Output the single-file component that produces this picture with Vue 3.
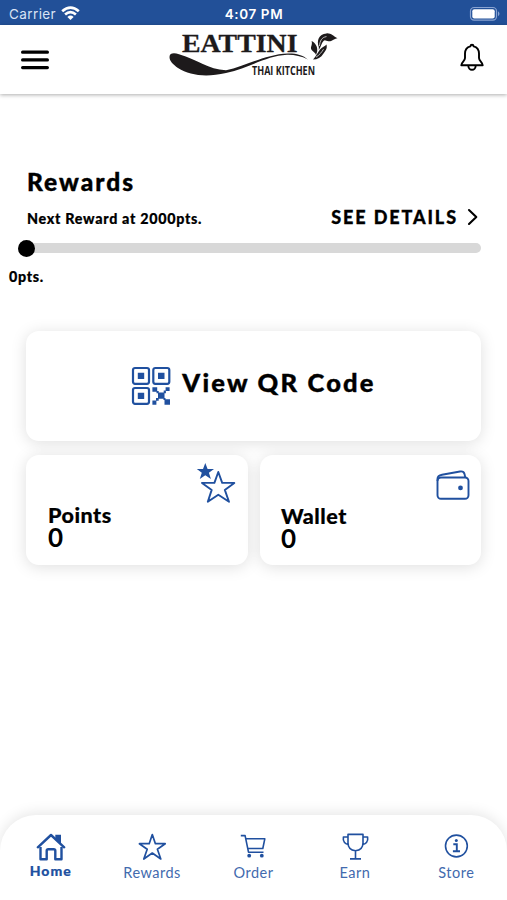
<script setup>
const progress = 0
</script>

<template>
  <div class="screen">
    <div class="status">
      <div class="carrier">
        <span>Carrier</span>
        <svg width="19" height="15" viewBox="0 0 19 15" fill="none" stroke="#fff" stroke-width="2.7">
          <path d="M1.2 5.3Q9.5-2 17.8 5.3" />
          <path d="M4.1 8.4Q9.5 3.7 14.9 8.4" />
          <path d="M9.5 14L6.4 10.9Q9.5 8.3 12.6 10.9Z" fill="#fff" stroke="none" />
        </svg>
      </div>
      <div class="time">4:07 PM</div>
      <div class="power">
        <svg width="32" height="16" viewBox="0 0 32 16">
          <rect x="1.5" y="1.5" width="26" height="12.6" rx="3.6" fill="none" stroke="#89a3d1" stroke-width="1.2" />
          <rect x="3.3" y="3.2" width="22.4" height="9.2" rx="2" fill="#fff" />
          <path d="M29 5.3Q32 7.8 29 10.3Z" fill="#89a3d1" />
        </svg>
      </div>
    </div>

    <header class="header">
      <svg class="menu" width="28" height="20" viewBox="0 0 28 20" stroke="#000" stroke-width="3.2" stroke-linecap="round">
        <path d="M1.6 2.2H26.4M1.6 9.9H26.4M1.6 17.6H26.4" />
      </svg>
      <svg class="logo" width="172" height="48" viewBox="168 31 172 48" fill="#1d1a1b">
        <text class="brand" x="182" y="51.8" textLength="115.5" lengthAdjust="spacingAndGlyphs">EATTINI</text>
        <path d="M169.5 57C169.5 53 174 52.6 179 54.3C198 60 208 69.5 226 70.2C245 67 264 54.2 288 53.4C296 53.2 303 55 308 59.5C301 56 294 54.6 287 54.8C266 56 250 67.5 226 73C206 77.5 190 75.5 178 68C173 64.5 169.5 61 169.5 57Z" />
        <path d="M318.8 47C316.5 41 318.5 34.2 326.5 33.4C331 33 333.5 36.5 337.5 38.2C333.5 39 332 41.6 328.5 41.3C326 41 325 39.4 323.5 41C321.5 43 321 46.5 318.8 50Z" />
        <path d="M311.6 41C315.5 43 317.8 46.5 317.2 51.5L316 55C315.5 52 311.5 51.5 311 48.5C310.8 46 312.6 44.5 311.6 41Z" />
        <path d="M313 59.6C316 56 318 52.5 320 49.5C322 47 325 46.6 326.5 44.5C327.5 49 325.5 50.5 323.5 53.5C321 57.5 317.5 59.6 313 59.6Z" />
        <path d="M319.4 46C320 41 321.5 37.3 326.5 36.6M316 57.2C319.5 55 321.8 52 323.5 49.2" fill="none" stroke="#fff" stroke-width=".7" />
        <text class="tagline" x="252" y="75.3" textLength="63" lengthAdjust="spacingAndGlyphs">THAI KITCHEN</text>
      </svg>
      <svg class="bell" width="26" height="30" viewBox="0 0 26 30" fill="none" stroke="#000" stroke-width="1.9" stroke-linejoin="round">
        <path d="M13 1.7C12 1.7 11.5 2.5 11.4 3.3C8 4.2 6 7 6 10.6V15C6 18 2.3 19.2 2.3 22.3H23.7C23.7 19.2 20 18 20 15V10.6C20 7 18 4.2 14.6 3.3C14.5 2.5 14 1.7 13 1.7Z" />
        <path d="M9.3 22.5A3.7 4.3 0 0 0 16.7 22.5" />
      </svg>
    </header>

    <main class="content">
      <h1>Rewards</h1>
      <div class="reward-row">
        <span class="next">Next Reward at 2000pts.</span>
        <a class="details">
          <span>SEE DETAILS</span>
          <svg width="12" height="18" viewBox="0 0 12 18" fill="none" stroke="#000" stroke-width="2.1" stroke-linecap="round" stroke-linejoin="round">
            <path d="M2 2L9.3 9L2 16" />
          </svg>
        </a>
      </div>
      <div class="track"><i class="thumb" :style="{ left: progress + '%' }"></i></div>
      <div class="current">0pts.</div>

      <section class="card qr">
        <svg width="40" height="40" viewBox="0 0 40 40" fill="#20509f">
          <g fill="none" stroke="#20509f" stroke-width="2.2">
            <rect x="2" y="2" width="16" height="15.8" rx="2" />
            <rect x="22.3" y="2" width="16" height="15.8" rx="2" />
            <rect x="2" y="22" width="16" height="15.8" rx="2" />
          </g>
          <path d="M6.8 6.7h6.4V13H6.8zM27 6.7h6.5V13H27zM6.8 26.8h6.4v6.3H6.8zM21.4 21.2h4.8v4.5h-4.8zM34.6 21.2h4v3.7h-4zM27 26.5h6.5v6.3H27zM21.4 34.5h4v4.2h-4zM33.5 33.2h5.5v5.5h-5.5zM25.5 25h2.2v2.2h-2.2zM32.7 24.5h2.2v2.7h-2.2zM25 32h2.7v2.7H25zM32.5 32h2v2h-2z" />
        </svg>
        <span>View QR Code</span>
      </section>

      <div class="tiles">
        <section class="card tile">
          <svg class="tile-icon" width="40" height="42" viewBox="0 0 40 42">
            <path d="M9.3 1L11.6 7H18L12.9 10.8L14.9 17L9.3 13.3L3.8 17L5.8 10.8L.8 7H7Z" fill="#20509f" />
            <path d="M22.3 10L26.2 20.9H38.3L28.8 27.9L33 39.8L22.3 32.8L11.8 39.8L15.7 27.9L6 20.9H18.4Z" fill="#fff" stroke="#20509f" stroke-width="1.9" stroke-linejoin="round" />
          </svg>
          <span class="label points">Points</span>
          <span class="value">0</span>
        </section>
        <section class="card tile second">
          <svg class="tile-icon wallet-icon" width="34" height="31" viewBox="0 0 34 31" fill="none" stroke="#20509f" stroke-width="1.9">
            <rect x="1.5" y="7.5" width="31" height="21.3" rx="3.5" />
            <path d="M1.5 11V8.8C1.5 6 3 5.2 6 4.7L24 1.5C27 1 28 2 28.5 4L29.3 7.5" />
            <circle cx="24.5" cy="17.9" r="2.4" fill="#20509f" stroke="none" />
          </svg>
          <span class="label wallet">Wallet</span>
          <span class="value">0</span>
        </section>
      </div>
    </main>

    <nav class="tabs">
      <a class="tab active">
        <svg width="32" height="30" viewBox="0 0 32 30" fill="none" stroke="#20509f" stroke-width="2.4" stroke-linejoin="round">
          <path d="M5.5 15V27.3H11.7V18.8Q11.7 17.3 13.2 17.3H18.8Q20.3 17.3 20.3 18.8V27.3H26.5V15" />
          <path d="M2.8 15.3L16 3L29.2 15.3" stroke-linecap="round" />
          <path d="M20.3 2.8H26V13L20.3 7Z" fill="#20509f" stroke="none" />
        </svg>
        <span>Home</span>
      </a>
      <a class="tab rewards">
        <svg width="32" height="30" viewBox="0 0 32 30" fill="none" stroke="#20509f" stroke-width="1.7" stroke-linejoin="round">
          <path d="M16.3 2.5L19.4 11.7H29.2L21.4 17.3L24.8 27L16.3 21L7.8 27L11.2 17.3L3.4 11.7H13.2Z" />
        </svg>
        <span>Rewards</span>
      </a>
      <a class="tab order">
        <svg width="32" height="30" viewBox="0 0 32 30" fill="none" stroke="#20509f" stroke-width="1.6" stroke-linejoin="round">
          <path d="M3.8 3.6H8.1L11.5 20.2H26.5M9 6.8H27.8L25.8 16.5H10.8" />
          <g fill="#20509f" stroke="none"><circle cx="12.2" cy="23.7" r="1.9" /><circle cx="24.8" cy="23.7" r="1.9" /></g>
        </svg>
        <span>Order</span>
      </a>
      <a class="tab earn">
        <svg width="32" height="30" viewBox="0 0 32 30" fill="none" stroke="#20509f" stroke-width="1.6" stroke-linejoin="round">
          <path d="M9 2.4H24V11C24 15.3 21 18.2 16.5 18.8C12 18.2 9 15.3 9 11ZM9 5H4.4C3.5 9.8 6.5 12.2 9.5 12.4M24 5H28.6C29.5 9.8 26.5 12.2 23.5 12.4M16.5 18.8V26.7M11 26.9H22" />
        </svg>
        <span>Earn</span>
      </a>
      <a class="tab store">
        <svg width="32" height="30" viewBox="0 0 32 30" fill="none" stroke="#20509f" stroke-width="1.6">
          <circle cx="16.4" cy="14" r="10.9" />
          <path d="M13.3 12.2H16.8V19M12.9 19.2H20" stroke-width="1.9" />
          <circle cx="16.3" cy="8.5" r="1.5" fill="#20509f" stroke="none" />
        </svg>
        <span>Store</span>
      </a>
    </nav>
  </div>
</template>

<style>
body { margin: 0; background: #fff; }
</style>

<style scoped>
* { box-sizing: border-box; }
.screen {
  height: 900px;
  display: flex;
  flex-direction: column;
  overflow: hidden;
  background: #fff;
  color: #000;
  font-family: Lato, "Liberation Sans", sans-serif;
  white-space: nowrap;
}
.status {
  height: 25px;
  flex: none;
  display: grid;
  grid-template-columns: 1fr auto 1fr;
  align-items: center;
  background: #225098;
  color: #fff;
  font-family: Inter, sans-serif;
  font-size: 13.5px;
  padding: 2px 8px 0 9px;
}
.carrier { display: flex; gap: 5px; align-items: center; color: #d9e3f4; letter-spacing: .4px; }
.time { font-weight: 600; font-size: 13.5px; letter-spacing: .6px; }
.power { display: flex; justify-content: flex-end; margin-right: -2px; }
.header {
  height: 69px;
  flex: none;
  display: flex;
  align-items: flex-start;
  justify-content: space-between;
  padding: 6px 22px 0 21px;
  box-shadow: 0 1px 4px rgba(0, 0, 0, .32);
}
.menu { margin-top: 19px; }
.brand { font: 700 25px "Liberation Serif", serif; stroke: #1d1a1b; stroke-width: .3px; }
.tagline { font: 700 11.5px "Open Sans", sans-serif; }
.bell { margin-top: 12px; }
.content { flex: 1; padding: 73px 26px 0; }
h1 { margin: 0 0 0 1px; font-size: 24.5px; line-height: 30px; font-weight: 900; letter-spacing: 2px; -webkit-text-stroke: .4px #000; }
.reward-row {
  display: flex;
  justify-content: space-between;
  align-items: center;
  height: 24px;
  margin: 8px 2px 0 1px;
}
.next { font-size: 14.3px; line-height: 20px; font-weight: 900; letter-spacing: .7px; padding-top: 4px; -webkit-text-stroke: .2px #000; }
.details { display: flex; align-items: center; gap: 9px; font-size: 18px; line-height: 22px; font-weight: 900; letter-spacing: 1.9px; -webkit-text-stroke: .3px #000; }
.details span { margin-left: -1px; }
.track { position: relative; height: 10px; margin-top: 14px; border-radius: 5px; background: #d8d8d8; }
.thumb { position: absolute; top: -3.5px; width: 17px; height: 17px; margin-left: -8px; border-radius: 50%; background: #000; }
.current { margin: 14px 0 0 -17px; font-size: 14.3px; line-height: 20px; font-weight: 900; letter-spacing: .7px; -webkit-text-stroke: .2px #000; }
.card { background: #fff; border-radius: 13px; box-shadow: 0 2px 16px rgba(0, 0, 0, .13); }
.qr {
  height: 110px;
  margin-top: 44px;
  display: flex;
  align-items: center;
  justify-content: center;
  gap: 11px;
  font-size: 25.5px;
  line-height: 30px;
  font-weight: 900;
  letter-spacing: 2.2px;
  -webkit-text-stroke: .4px #000;
}
.qr span { margin-top: -8px; }
.tiles { display: grid; grid-template-columns: 222px 221px; gap: 12px; margin-top: 14px; }
.tile { position: relative; height: 110px; padding: 49px 0 0 22px; display: flex; flex-direction: column; }
.second { padding: 50px 0 0 21px; }
.tile-icon { position: absolute; top: 7px; right: 12px; }
.wallet-icon { top: 15px; right: 11px; }
.label { font-size: 21.5px; line-height: 22px; font-weight: 900; letter-spacing: .5px; -webkit-text-stroke: .2px #000; }
.value { font-size: 26px; line-height: 23px; font-weight: 700; }
.tabs {
  height: 85px;
  flex: none;
  display: grid;
  grid-template-columns: repeat(5, 1fr);
  padding-top: 17px;
  border-radius: 36px 36px 0 0;
  background: #fff;
  box-shadow: 0 -2px 14px rgba(0, 0, 0, .1);
}
.tab { display: flex; flex-direction: column; align-items: center; color: #426aae; font-size: 14.5px; line-height: 20px; letter-spacing: .5px; }
.tab span { margin-top: 1px; }
.tab.active { color: #20509f; font-weight: 900; font-size: 14px; letter-spacing: 1px; }
.tab.active span { margin-top: -1px; -webkit-text-stroke: .2px #20509f; }
</style>
